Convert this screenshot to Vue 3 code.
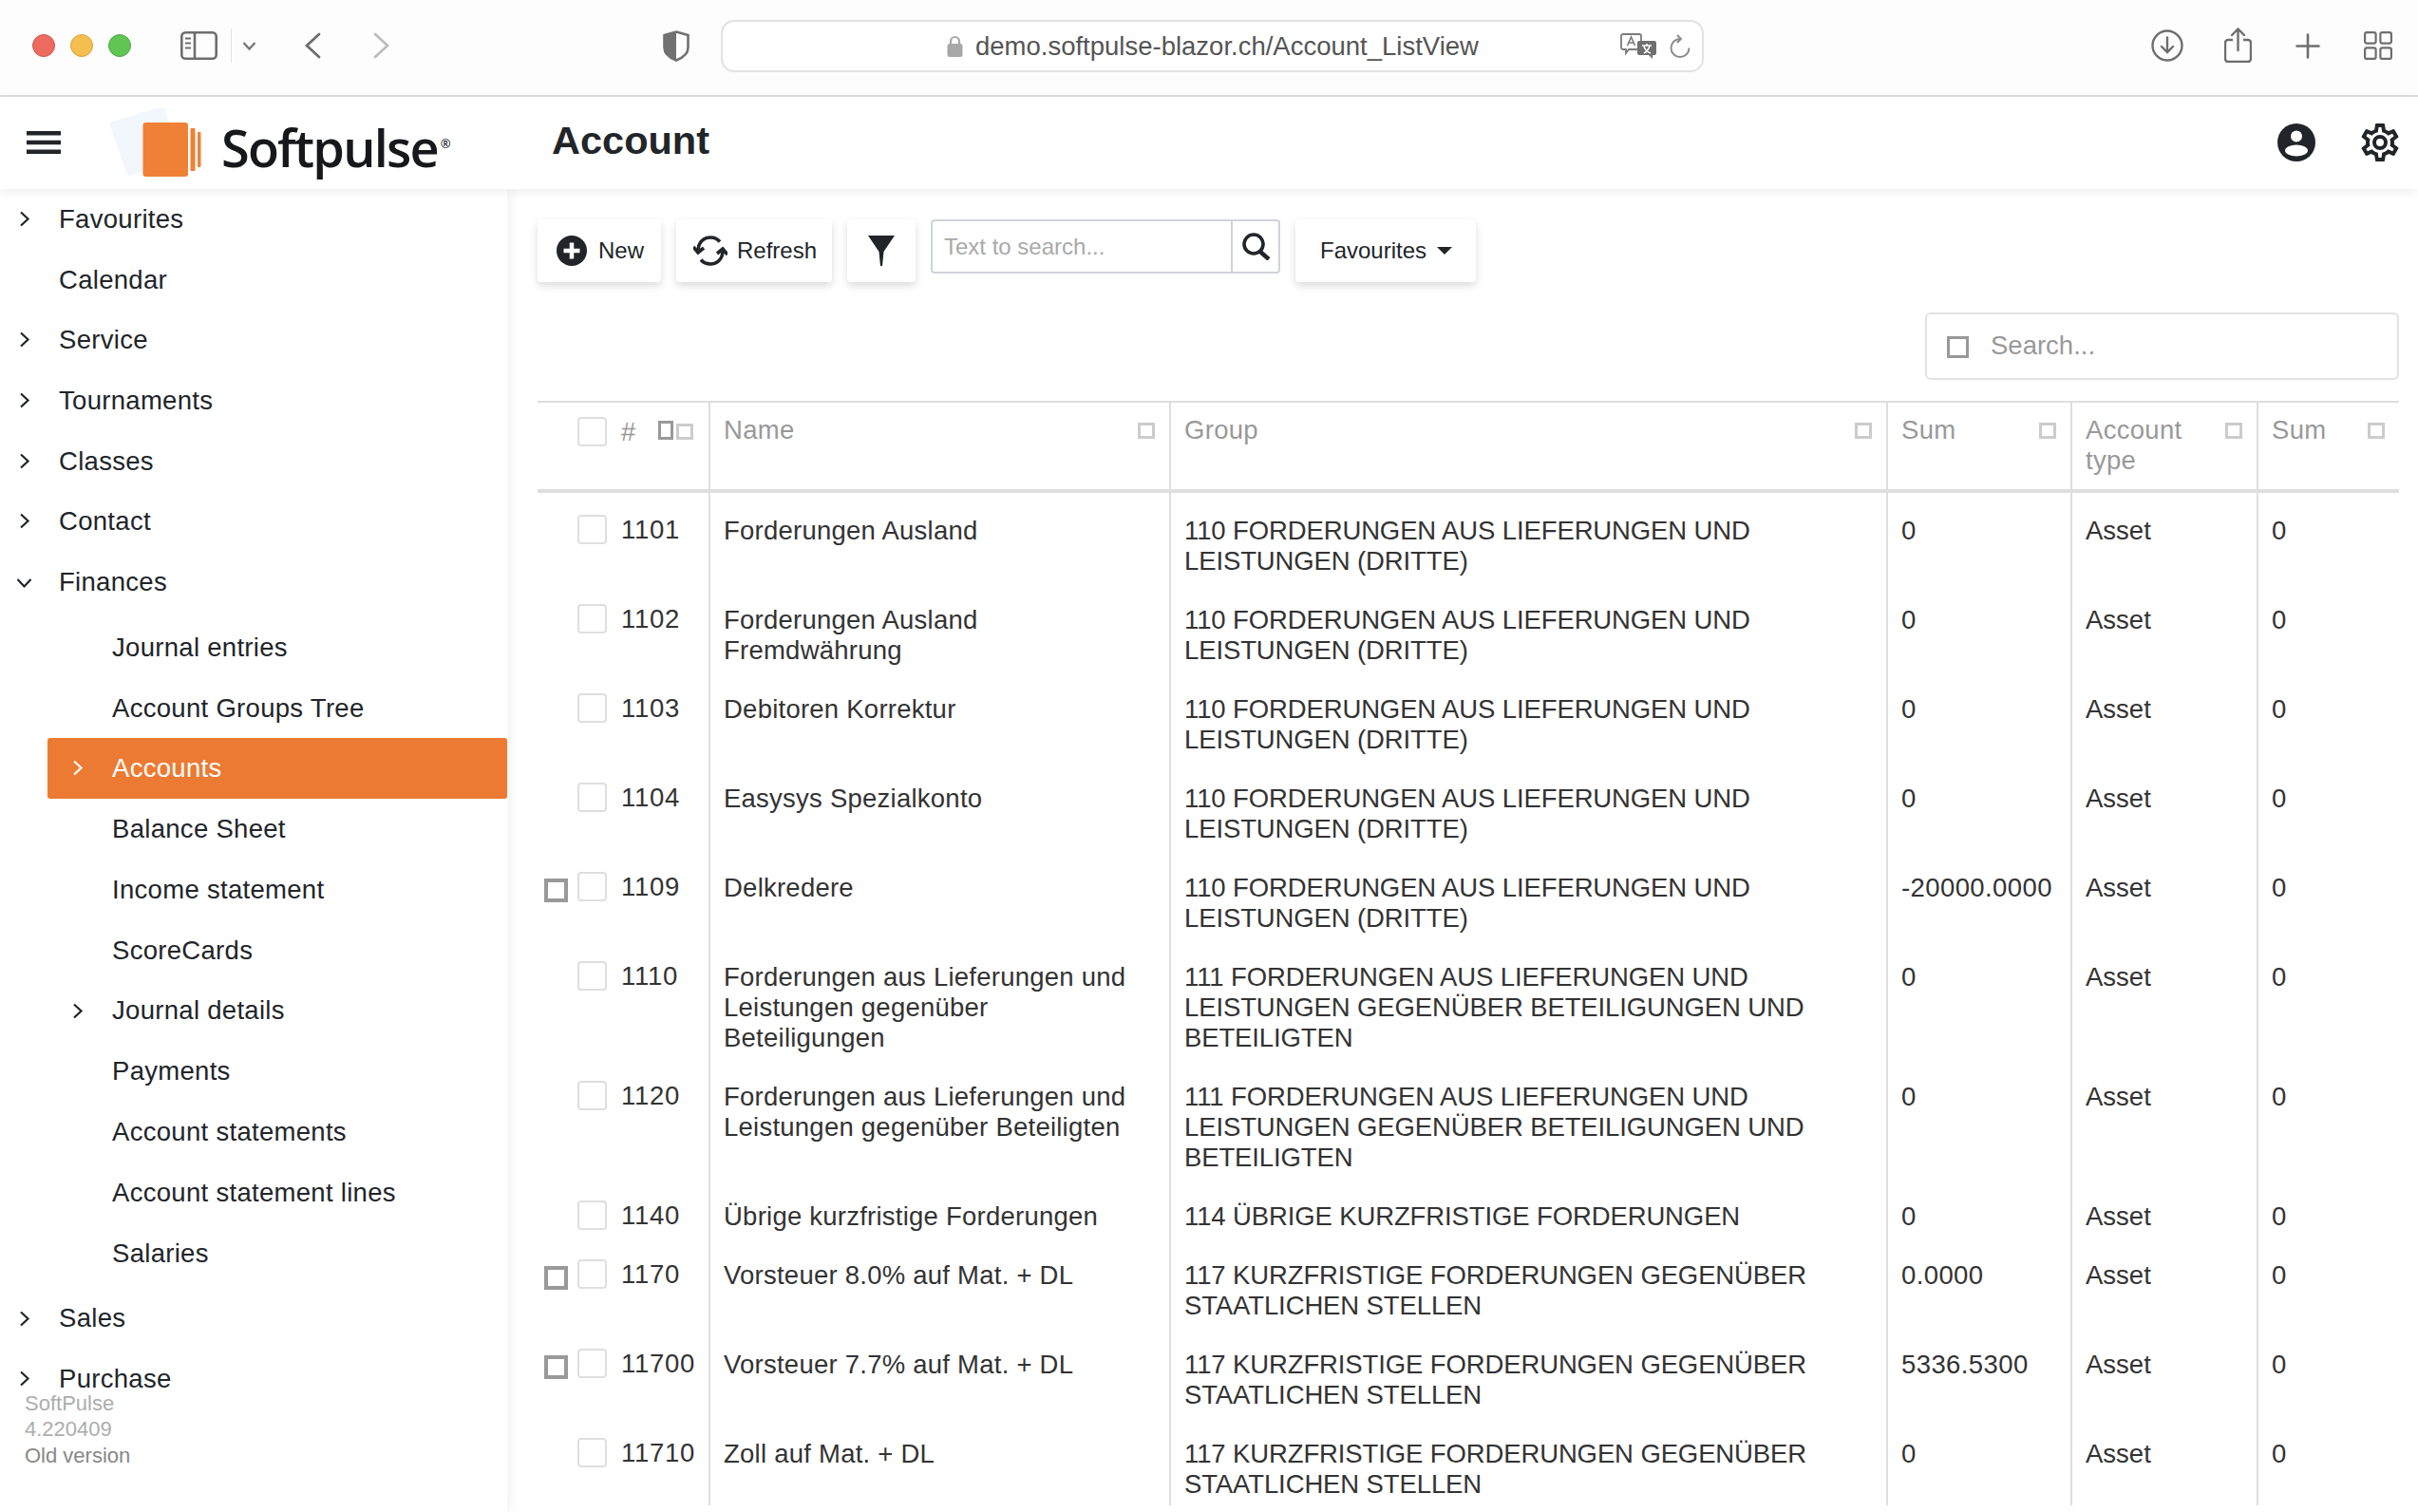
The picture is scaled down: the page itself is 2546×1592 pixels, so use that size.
<template>
  <div class="page">
    <div class="browser-bar">
      <span class="dot red"></span>
      <span class="dot yellow"></span>
      <span class="dot green"></span>
      <svg class="b-sidebar" width="39" height="30" viewBox="0 0 39 30" fill="none" stroke="#6e6e6e" stroke-width="2.6">
        <rect x="1.3" y="1.3" width="36.4" height="27.4" rx="4" />
        <path d="M15 1.3v27.4" />
        <path d="M5 7.5h6M5 12.5h6M5 17.5h6" stroke-width="2" />
      </svg>
      <span class="b-sep"></span>
      <svg class="b-down" width="15" height="9" viewBox="0 0 15 9" fill="none" stroke="#777" stroke-width="2.4">
        <path d="M1.5 1l6 6.5 6-6.5" />
      </svg>
      <svg class="b-back" width="18" height="28" viewBox="0 0 18 28" fill="none" stroke="#6e6e6e" stroke-width="2.8" stroke-linecap="round">
        <path d="M16 2L3 14l13 12" />
      </svg>
      <svg class="b-forward" width="18" height="28" viewBox="0 0 18 28" fill="none" stroke="#bdbdbd" stroke-width="2.8" stroke-linecap="round">
        <path d="M2 2l13 12L2 26" />
      </svg>
      <svg class="b-shield" width="28" height="33" viewBox="0 0 28 33">
        <path d="M14 1.5L26.5 5v13c0 6.5-6 11-12.5 13.5C7.5 29 1.5 24.5 1.5 18V5z" fill="#fff" stroke="#717171" stroke-width="2.6" />
        <path d="M14 1.5L1.5 5v13c0 6.5 6 11 12.5 13.5z" fill="#717171" />
      </svg>
      <div class="url-box">
        <svg class="lock" width="17" height="23" viewBox="0 0 17 23">
          <path d="M4 10V6.5a4.5 4.5 0 0 1 9 0V10" fill="none" stroke="#a8a8a8" stroke-width="2.2" />
          <rect x="0.5" y="9" width="16" height="14" rx="2.5" fill="#a8a8a8" />
        </svg>
        <span class="url-text">demo.softpulse-blazor.ch/Account_ListView</span>
        <svg class="translate" width="39" height="27" viewBox="0 0 39 27">
          <path d="M3 1h17a2 2 0 0 1 2 2v12a2 2 0 0 1-2 2H9l-3 4v-4H3a2 2 0 0 1-2-2V3a2 2 0 0 1 2-2z" fill="#fff" stroke="#7b7b7b" stroke-width="1.8" />
          <path d="M7.5 13L11.5 4l4 9M9 10h5" fill="none" stroke="#7b7b7b" stroke-width="1.6" />
          <path d="M20 8h16a2 2 0 0 1 2 2v11a2 2 0 0 1-2 2h-2v4l-4-4H20a2 2 0 0 1-2-2V10a2 2 0 0 1 2-2z" fill="#6f6f6f" />
          <path d="M23 13h10M28 11v2M25 21c3-1.5 5-4 6-8M25 14c1 3 4 6 7 7" fill="none" stroke="#fff" stroke-width="1.5" />
        </svg>
        <svg class="reload" width="22" height="25" viewBox="0 0 22 25" fill="none" stroke="#8a8a8a" stroke-width="1.9">
          <path d="M11 5a9.5 9.5 0 1 0 9.5 9.5" />
          <path d="M8 1l4 4-4 4" />
        </svg>
      </div>
      <svg class="b-download" width="34" height="34" viewBox="0 0 34 34" fill="none" stroke="#6e6e6e" stroke-width="2.4">
        <circle cx="17" cy="17" r="15.5" />
        <path d="M17 8.5v15M11 18l6 6 6-6" stroke-linecap="round" />
      </svg>
      <svg class="b-share" width="29" height="37" viewBox="0 0 29 37" fill="none" stroke="#6e6e6e" stroke-width="2.4">
        <path d="M9 13H4a3 3 0 0 0-3 3v17a3 3 0 0 0 3 3h21a3 3 0 0 0 3-3V16a3 3 0 0 0-3-3h-5" />
        <path d="M14.5 24V2M8 8l6.5-6.5L21 8" stroke-linecap="round" />
      </svg>
      <svg class="b-plus" width="26" height="27" viewBox="0 0 26 27" fill="none" stroke="#6e6e6e" stroke-width="2.6" stroke-linecap="round">
        <path d="M13 1.5v24M1.5 13.5h23" />
      </svg>
      <svg class="b-grid" width="30" height="30" viewBox="0 0 30 30" fill="none" stroke="#6e6e6e" stroke-width="2.2">
        <rect x="1.1" y="1.1" width="11.5" height="11.5" rx="2" />
        <rect x="17.4" y="1.1" width="11.5" height="11.5" rx="2" />
        <rect x="1.1" y="17.4" width="11.5" height="11.5" rx="2" />
        <rect x="17.4" y="17.4" width="11.5" height="11.5" rx="2" />
      </svg>
    </div>

    <header class="app-header">
      <svg class="burger" width="36" height="24" viewBox="0 0 36 24" fill="#212529">
        <rect width="36" height="4.5" />
        <rect y="9.75" width="36" height="4.5" />
        <rect y="19.5" width="36" height="4.5" />
      </svg>
      <svg class="logo-mark" width="97" height="75" viewBox="0 0 97 75">
        <path d="M3 16L53 1Q58 0 59 4L76 54L24 72Q20 74 18 70L1 21Q0 17 3 16Z" fill="#f2f7fd" />
        <rect x="35.5" y="17" width="47.5" height="57" rx="3" fill="#ef8136" />
        <rect x="85.5" y="23" width="5" height="45" rx="1" fill="#ef8136" />
        <rect x="93" y="27" width="3.5" height="37" rx="1" fill="#ef8136" />
      </svg>
      <span class="logo-text">Softpulse<sup class="reg">®</sup></span>
      <h1 class="page-title">Account</h1>
      <svg class="user-icon" width="40" height="40" viewBox="0 0 40 40">
        <circle cx="20" cy="20" r="20" fill="#212529" />
        <circle cx="20" cy="13.5" r="6" fill="#fff" />
        <ellipse cx="20" cy="28.5" rx="12" ry="6" fill="#fff" />
      </svg>
      <svg class="gear-icon" width="40" height="40" viewBox="2 2 20 20" fill="#212529">
        <path :d="gearPath" />
      </svg>
    </header>

    <div class="body">
      <aside class="sidebar">
        <nav>
          <template v-for="item in menu" :key="item.label">
            <div class="nav-item">
              <svg v-if="item.arrow === 'right'" class="nav-arrow" width="12" height="17" viewBox="0 0 12 17" fill="none" stroke="#212529" stroke-width="2.2">
                <path d="M2 1.5l7.5 7-7.5 7" />
              </svg>
              <svg v-if="item.arrow === 'down'" class="nav-arrow down" width="17" height="12" viewBox="0 0 17 12" fill="none" stroke="#212529" stroke-width="2.2">
                <path d="M1.5 2l7 7.5 7-7.5" />
              </svg>
              <span class="nav-label">{{ item.label }}</span>
            </div>
            <div v-if="item.children" class="sub-list">
              <div
                v-for="child in item.children"
                :key="child.label"
                class="sub-item"
                :class="{ active: child.active }"
              >
                <svg v-if="child.arrow" class="sub-arrow" width="12" height="17" viewBox="0 0 12 17" fill="none" :stroke="child.active ? '#fff' : '#212529'" stroke-width="2.2">
                  <path d="M2 1.5l7.5 7-7.5 7" />
                </svg>
                <span>{{ child.label }}</span>
              </div>
            </div>
          </template>
        </nav>
        <div class="version">
          <div>SoftPulse</div>
          <div>4.220409</div>
          <div class="old">Old version</div>
        </div>
      </aside>

      <main class="content">
        <div class="toolbar">
          <button class="tool-btn new-btn">
            <svg width="32" height="32" viewBox="0 0 32 32">
              <circle cx="16" cy="16" r="16" fill="#212529" />
              <path d="M16 7.5v17M7.5 16h17" stroke="#fff" stroke-width="4.5" />
            </svg>
            New
          </button>
          <button class="tool-btn refresh-btn">
            <svg width="36" height="32" viewBox="0 0 36 32" fill="none" stroke="#212529" stroke-width="3.6">
              <path d="M5 15C5.5 7 11 2 18 2c4 0 7.5 1.5 10 4.5" />
              <path d="M31 17c-.5 8-6 13-13 13-4 0-7.5-1.5-10-4.5" />
              <path d="M0 12l5 6 6-5" />
              <path d="M36 20l-5-6-6 5" />
            </svg>
            Refresh
          </button>
          <button class="tool-btn filter-btn">
            <svg width="28" height="32" viewBox="0 0 28 32" fill="#212529">
              <path d="M0 0h28L16.5 17 15 32h-2l-1.5-15z" />
            </svg>
          </button>
          <div class="text-search">
            <span class="ts-placeholder">Text to search...</span>
            <span class="ts-button">
              <svg width="31" height="29" viewBox="0 0 31 29" fill="none" stroke="#212529" stroke-width="3.6">
                <circle cx="13" cy="12" r="10" />
                <path d="M20 20l9 8" stroke-width="4.5" />
              </svg>
            </span>
          </div>
          <button class="tool-btn fav-btn">
            Favourites
            <span class="caret"></span>
          </button>
        </div>

        <div class="search-row">
          <div class="grid-search">
            <span class="gs-box"></span>
            <span class="gs-text">Search...</span>
          </div>
        </div>

        <table class="grid">
          <colgroup>
            <col v-for="w in colWidths" :key="w.id" :style="{ width: w.px + 'px' }" />
          </colgroup>
          <thead>
            <tr>
              <th class="first-col">
                <div class="first-inner head">
                  <span class="row-mark empty"></span>
                  <span class="check"></span>
                  <span class="hash">#</span>
                  <span class="head-mark dark"></span>
                  <span class="head-mark"></span>
                </div>
              </th>
              <th v-for="h in headers" :key="h.id">
                <div class="head-cell">
                  <span>{{ h.label }}</span>
                  <span class="head-mark"></span>
                </div>
              </th>
            </tr>
          </thead>
          <tbody>
            <tr v-for="row in rows" :key="row.no">
              <td class="first-col">
                <div class="first-inner">
                  <span class="row-mark" :class="{ empty: !row.mark }"></span>
                  <span class="check"></span>
                  <span class="no">{{ row.no }}</span>
                </div>
              </td>
              <td class="name-cell">{{ row.name }}</td>
              <td class="group-cell">{{ row.group }}</td>
              <td class="sum-cell">{{ row.sum }}</td>
              <td>Asset</td>
              <td>0</td>
            </tr>
          </tbody>
        </table>
      </main>
    </div>
  </div>
</template>

<script setup>
const gearPath = 'M12,8A4,4 0 0,1 16,12A4,4 0 0,1 12,16A4,4 0 0,1 8,12A4,4 0 0,1 12,8M12,10A2,2 0 0,0 10,12A2,2 0 0,0 12,14A2,2 0 0,0 14,12A2,2 0 0,0 12,10M10,22C9.75,22 9.54,21.82 9.5,21.58L9.13,18.93C8.5,18.68 7.96,18.34 7.44,17.94L4.95,18.95C4.73,19.03 4.46,18.95 4.34,18.73L2.34,15.27C2.21,15.05 2.27,14.78 2.46,14.63L4.57,12.97L4.5,12L4.57,11L2.46,9.37C2.27,9.22 2.21,8.95 2.34,8.73L4.34,5.27C4.46,5.05 4.73,4.96 4.95,5.05L7.44,6.05C7.96,5.66 8.5,5.32 9.13,5.07L9.5,2.42C9.54,2.18 9.75,2 10,2H14C14.25,2 14.46,2.18 14.5,2.42L14.87,5.07C15.5,5.32 16.04,5.66 16.56,6.05L19.05,5.05C19.27,4.96 19.54,5.05 19.66,5.27L21.66,8.73C21.79,8.95 21.73,9.22 21.54,9.37L19.43,11L19.5,12L19.43,13L21.54,14.63C21.73,14.78 21.79,15.05 21.66,15.27L19.66,18.73C19.54,18.95 19.27,19.04 19.05,18.95L16.56,17.95C16.04,18.34 15.5,18.68 14.87,18.93L14.5,21.58C14.46,21.82 14.25,22 14,22H10M11.25,4L10.88,6.61C9.68,6.86 8.62,7.5 7.85,8.39L5.44,7.35L4.69,8.65L6.8,10.2C6.4,11.37 6.4,12.64 6.8,13.8L4.68,15.36L5.43,16.66L7.86,15.62C8.63,16.5 9.68,17.14 10.87,17.38L11.24,20H12.76L13.13,17.39C14.32,17.14 15.37,16.5 16.14,15.62L18.57,16.66L19.32,15.36L17.2,13.81C17.6,12.64 17.6,11.37 17.2,10.2L19.31,8.65L18.56,7.35L16.15,8.39C15.38,7.5 14.32,6.86 13.12,6.62L12.75,4H11.25Z';

const menu = [
  { label: 'Favourites', arrow: 'right' },
  { label: 'Calendar' },
  { label: 'Service', arrow: 'right' },
  { label: 'Tournaments', arrow: 'right' },
  { label: 'Classes', arrow: 'right' },
  { label: 'Contact', arrow: 'right' },
  {
    label: 'Finances',
    arrow: 'down',
    children: [
      { label: 'Journal entries' },
      { label: 'Account Groups Tree' },
      { label: 'Accounts', arrow: true, active: true },
      { label: 'Balance Sheet' },
      { label: 'Income statement' },
      { label: 'ScoreCards' },
      { label: 'Journal details', arrow: true },
      { label: 'Payments' },
      { label: 'Account statements' },
      { label: 'Account statement lines' },
      { label: 'Salaries' }
    ]
  },
  { label: 'Sales', arrow: 'right' },
  { label: 'Purchase', arrow: 'right' }
];

const colWidths = [
  { id: 'no', px: 180 },
  { id: 'name', px: 485 },
  { id: 'group', px: 755 },
  { id: 'sum', px: 194 },
  { id: 'type', px: 196 },
  { id: 'sum2', px: 150 }
];

const headers = [
  { id: 'name', label: 'Name' },
  { id: 'group', label: 'Group' },
  { id: 'sum', label: 'Sum' },
  { id: 'type', label: 'Account type' },
  { id: 'sum2', label: 'Sum' }
];

const g110 = '110 FORDERUNGEN AUS LIEFERUNGEN UND LEISTUNGEN (DRITTE)';
const g111 = '111 FORDERUNGEN AUS LIEFERUNGEN UND LEISTUNGEN GEGENÜBER BETEILIGUNGEN UND BETEILIGTEN';
const g117 = '117 KURZFRISTIGE FORDERUNGEN GEGENÜBER STAATLICHEN STELLEN';

const rows = [
  { no: 1101, name: 'Forderungen Ausland', group: g110, sum: '0' },
  { no: 1102, name: 'Forderungen Ausland Fremdwährung', group: g110, sum: '0' },
  { no: 1103, name: 'Debitoren Korrektur', group: g110, sum: '0' },
  { no: 1104, name: 'Easysys Spezialkonto', group: g110, sum: '0' },
  { no: 1109, name: 'Delkredere', group: g110, sum: '-20000.0000', mark: true },
  { no: 1110, name: 'Forderungen aus Lieferungen und Leistungen gegenüber Beteiligungen', group: g111, sum: '0' },
  { no: 1120, name: 'Forderungen aus Lieferungen und Leistungen gegenüber Beteiligten', group: g111, sum: '0' },
  { no: 1140, name: 'Übrige kurzfristige Forderungen', group: '114 ÜBRIGE KURZFRISTIGE FORDERUNGEN', sum: '0' },
  { no: 1170, name: 'Vorsteuer 8.0% auf Mat. + DL', group: g117, sum: '0.0000', mark: true },
  { no: 11700, name: 'Vorsteuer 7.7% auf Mat. + DL', group: g117, sum: '5336.5300', mark: true },
  { no: 11710, name: 'Zoll auf Mat. + DL', group: g117, sum: '0' }
];
</script>

<style>
html,
body {
  margin: 0;
  background: #fff;
}
</style>

<style scoped>
.page {
  width: 2546px;
  height: 1592px;
  overflow: hidden;
  display: flex;
  flex-direction: column;
  font-family: "Liberation Sans", Arial, sans-serif;
  font-size: 27.5px;
  line-height: 32px;
  color: #212529;
  background: #fff;
}

.browser-bar {
  flex: 0 0 102px;
  box-sizing: border-box;
  height: 102px;
  display: flex;
  align-items: center;
  background: #fdfdfd;
  border-bottom: 2px solid #dcdcdc;
  padding-left: 34px;
  padding-bottom: 4px;
}

.dot {
  width: 24px;
  height: 24px;
  border-radius: 50%;
  margin-right: 16px;
  box-sizing: border-box;
}

.red {
  background: #ec6a5e;
  border: 1px solid #d1574c;
}

.yellow {
  background: #f4bf4f;
  border: 1px solid #d8a33d;
}

.green {
  background: #61c554;
  border: 1px solid #50a845;
}

.b-sidebar {
  margin-left: 36px;
}

.b-sep {
  width: 1px;
  height: 36px;
  background: #e3e3e3;
  margin-left: 14px;
}

.b-down {
  margin-left: 11px;
}

.b-back {
  margin-left: 50px;
}

.b-forward {
  margin-left: 55px;
}

.b-shield {
  margin-left: 287px;
}

.url-box {
  box-sizing: border-box;
  width: 1035px;
  height: 55px;
  margin-left: 33px;
  border: 2px solid #e2e2e2;
  border-radius: 14px;
  background: #fff;
  display: flex;
  align-items: center;
  padding-left: 236px;
}

.lock {
  flex: none;
}

.url-text {
  margin-left: 13px;
  margin-top: 2px;
  font-size: 27.5px;
  color: #555;
  white-space: nowrap;
  width: 532px;
}

.translate {
  margin-left: 147px;
  flex: none;
}

.reload {
  margin-left: 13px;
  flex: none;
}

.b-download {
  margin-left: 471px;
}

.b-share {
  margin-left: 43px;
  margin-top: -2px;
}

.b-plus {
  margin-left: 46px;
}

.b-grid {
  margin-left: 46px;
}

.app-header {
  flex: 0 0 97px;
  height: 97px;
  display: flex;
  align-items: center;
  position: relative;
  z-index: 2;
  background: #fff;
  box-shadow: 0 3px 10px rgba(0, 0, 0, 0.07);
}

.burger {
  margin-left: 28px;
  margin-top: -2px;
}

.logo-mark {
  margin-left: 51px;
  margin-top: -3px;
}

.logo-text {
  width: 240px;
  margin-left: 21px;
  font-family: "Open Sans", sans-serif;
  font-size: 54px;
  font-weight: 600;
  line-height: 60px;
  letter-spacing: -1.8px;
  color: #16181b;
  margin-top: 8px;
}

.reg {
  font-size: 13px;
  line-height: 0;
  letter-spacing: 0;
  vertical-align: 20px;
  margin-left: 3px;
}

.page-title {
  margin: -6px 0 0 108px;
  font-size: 41.5px;
  line-height: 50px;
  font-weight: 700;
}

.user-icon {
  margin-left: auto;
  margin-top: -2px;
}

.gear-icon {
  margin-left: 48px;
  margin-right: 20px;
  margin-top: -2px;
}

.body {
  flex: 1;
  min-height: 0;
  display: flex;
}

.sidebar {
  flex: 0 0 534px;
  width: 534px;
  position: relative;
  background: #fff;
  box-shadow: 4px 0 10px rgba(0, 0, 0, 0.05);
  z-index: 1;
  letter-spacing: 0.3px;
}

.nav-item {
  height: 63.7px;
  display: flex;
  align-items: center;
  padding-left: 62px;
  position: relative;
}

.nav-arrow {
  position: absolute;
  left: 20px;
  top: 23px;
}

.nav-arrow.down {
  left: 17px;
  top: 27px;
}

.sub-list {
  margin: 5px 0;
}

.sub-item {
  height: 63.8px;
  margin-left: 50px;
  padding-left: 68px;
  display: flex;
  align-items: center;
  position: relative;
  border-radius: 3px;
}

.sub-item.active {
  background: #ec7a33;
  color: #fff;
}

.sub-arrow {
  position: absolute;
  left: 26px;
  top: 23px;
}

.version {
  position: absolute;
  left: 26px;
  bottom: 46px;
  font-size: 22px;
  line-height: 27.5px;
  letter-spacing: 0;
  color: #adadad;
}

.version .old {
  color: #888;
}

.content {
  flex: 1;
  min-width: 0;
  padding: 32px 20px 0 32px;
}

.toolbar {
  display: flex;
  gap: 16px;
  align-items: flex-start;
  height: 66px;
}

.tool-btn {
  height: 66px;
  box-sizing: border-box;
  border: none;
  background: #fff;
  border-radius: 4px;
  box-shadow: 0 4px 9px rgba(0, 0, 0, 0.14);
  display: flex;
  align-items: center;
  font-family: inherit;
  font-size: 24px;
  color: #212529;
  padding: 0;
}

.new-btn {
  width: 130px;
  padding-left: 20px;
  gap: 12px;
}

.refresh-btn {
  width: 164px;
  padding-left: 18px;
  gap: 10px;
}

.filter-btn {
  width: 72px;
  justify-content: center;
}

.fav-btn {
  width: 190px;
  padding-left: 26px;
}

.caret {
  width: 0;
  height: 0;
  margin-left: 11px;
  border-left: 8px solid transparent;
  border-right: 8px solid transparent;
  border-top: 8px solid #212529;
}

.text-search {
  box-sizing: border-box;
  width: 368px;
  height: 57px;
  border: 2px solid #ced4da;
  border-radius: 4px;
  display: flex;
  align-items: center;
  background: #fff;
}

.ts-placeholder {
  flex: 1;
  padding-left: 12px;
  font-size: 24px;
  color: #a9a9a9;
}

.ts-button {
  width: 50px;
  height: 100%;
  border-left: 2px solid #ced4da;
  display: flex;
  align-items: center;
  justify-content: center;
  box-sizing: border-box;
}

.search-row {
  display: flex;
  justify-content: flex-end;
  margin-top: 32px;
}

.grid-search {
  box-sizing: border-box;
  width: 499px;
  height: 71px;
  border: 2px solid #e2e2e2;
  border-radius: 6px;
  display: flex;
  align-items: center;
  padding-left: 21px;
}

.gs-box {
  box-sizing: border-box;
  width: 23px;
  height: 23px;
  border: 3px solid #999;
  flex: none;
  margin-top: 2px;
}

.gs-text {
  margin-left: 23px;
  color: #999;
  margin-top: -2px;
}

.grid {
  margin-top: 22px;
  width: 1960px;
  table-layout: fixed;
  border-collapse: separate;
  border-spacing: 0;
  color: #333;
}

th {
  padding: 13px 15px 14px 14px;
  border-top: 2px solid #dedede;
  border-bottom: 4px solid #dedede;
  border-left: 2px solid #dedede;
  font-weight: 400;
  text-align: left;
  vertical-align: top;
  color: #999;
  letter-spacing: 0.3px;
}

td {
  padding: 24px 30px 6px 14px;
  border-left: 2px solid #dedede;
  vertical-align: top;
}

th.first-col,
td.first-col {
  border-left: none;
  padding: 0;
}

.name-cell {
  letter-spacing: 0.24px;
}

.group-cell {
  letter-spacing: -0.12px;
}

.sum-cell {
  white-space: nowrap;
  padding-right: 0;
  letter-spacing: 0.4px;
}

.first-inner {
  display: flex;
  align-items: flex-start;
  padding: 23px 0 0 7px;
}

.first-inner.head {
  padding-top: 15px;
}

.row-mark {
  box-sizing: border-box;
  flex: none;
  width: 25px;
  height: 25px;
  margin-top: 7px;
  border: 4px solid #999;
}

.row-mark.empty {
  border-color: transparent;
}

.check {
  box-sizing: border-box;
  flex: none;
  width: 31px;
  height: 31px;
  margin-left: 10px;
  border: 2px solid #dfdfdf;
  border-radius: 4px;
  background: #fff;
}

.no {
  margin-left: 15px;
  white-space: nowrap;
  letter-spacing: 0.7px;
}

.hash {
  margin-left: 15px;
  width: 39px;
  color: #999;
}

.head-cell {
  display: flex;
  justify-content: space-between;
  align-items: flex-start;
  gap: 10px;
}

.head-mark {
  box-sizing: border-box;
  flex: none;
  width: 18px;
  height: 17px;
  margin-top: 8px;
  border: 3px solid #ccc;
}

.first-inner .head-mark {
  margin-top: 7px;
}

.first-inner .head-mark.dark {
  width: 16px;
  height: 20px;
  margin-top: 4px;
  margin-right: 3px;
  border-color: #999;
}
</style>
